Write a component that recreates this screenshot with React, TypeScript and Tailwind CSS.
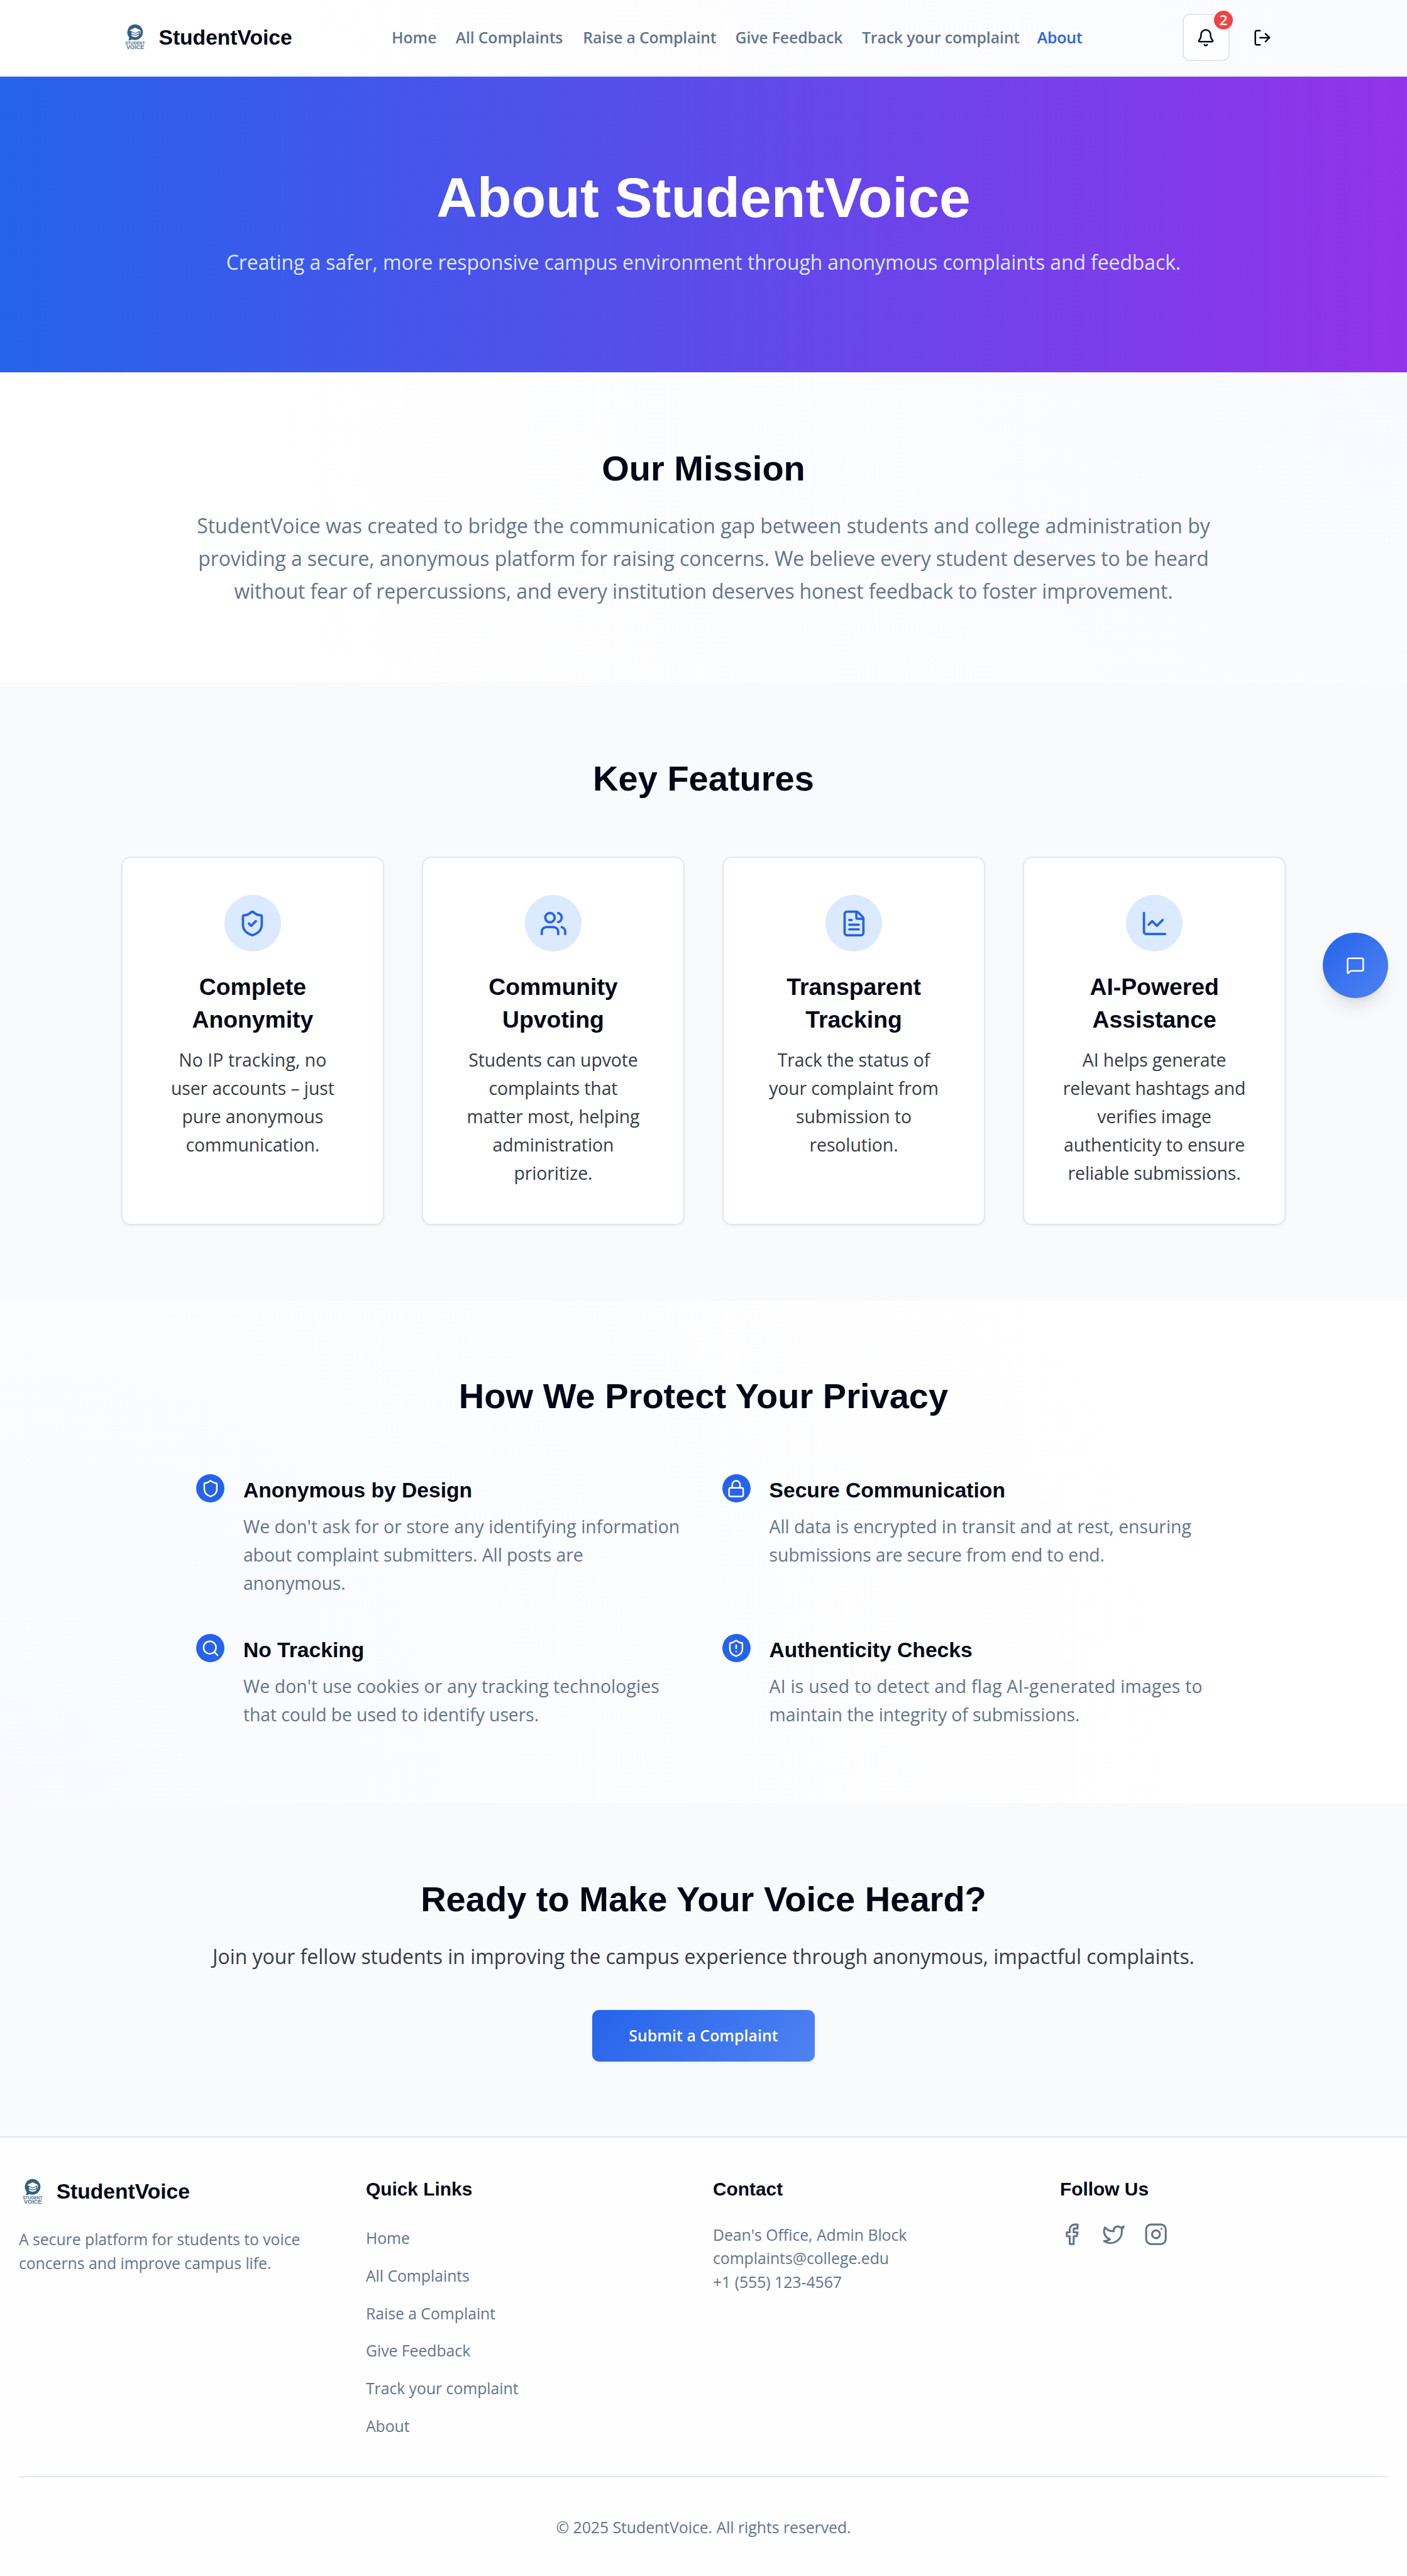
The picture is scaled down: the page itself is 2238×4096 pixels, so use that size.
import {
  Bell,
  ChartLine,
  Facebook,
  FileText,
  Instagram,
  Lock,
  LogOut,
  MessageSquare,
  Search,
  Shield,
  ShieldAlert,
  ShieldCheck,
  Twitter,
  Users,
} from "lucide-react";

type Line = string | { text: string; tracking: string };

const navItems = [
  { label: "Home", width: "w-[2.4rem]" },
  { label: "All Complaints", width: "w-[5.78rem]" },
  { label: "Raise a Complaint", width: "w-[7.11rem]" },
  { label: "Give Feedback", width: "w-[5.74rem]" },
  { label: "Track your complaint", width: "w-[8.33rem]" },
  { label: "About", width: "w-[2.46rem]", active: true },
];

const missionLines: Line[] = [
  {
    text: "StudentVoice was created to bridge the communication gap between students and college administration by",
    tracking: "tracking-[0.0005em]",
  },
  "providing a secure, anonymous platform for raising concerns. We believe every student deserves to be heard",
  {
    text: "without fear of repercussions, and every institution deserves honest feedback to foster improvement.",
    tracking: "tracking-[-0.005em]",
  },
];

const features = [
  {
    icon: ShieldCheck,
    title: ["Complete", "Anonymity"],
    lines: [
      { text: "No IP tracking, no", tracking: "tracking-[0.004em]" },
      "user accounts – just",
      "pure anonymous",
      "communication.",
    ] as Line[],
  },
  {
    icon: Users,
    title: ["Community", "Upvoting"],
    lines: ["Students can upvote", "complaints that", "matter most, helping", "administration", "prioritize."] as Line[],
  },
  {
    icon: FileText,
    title: ["Transparent", "Tracking"],
    lines: ["Track the status of", "your complaint from", "submission to", "resolution."] as Line[],
  },
  {
    icon: ChartLine,
    title: ["AI-Powered", "Assistance"],
    lines: [
      "AI helps generate",
      "relevant hashtags and",
      "verifies image",
      "authenticity to ensure",
      "reliable submissions.",
    ] as Line[],
  },
];

const privacy = [
  {
    icon: Shield,
    title: "Anonymous by Design",
    lines: [
      { text: "We don't ask for or store any identifying information", tracking: "tracking-[0.002em]" },
      "about complaint submitters. All posts are",
      "anonymous.",
    ] as Line[],
  },
  {
    icon: Lock,
    title: "Secure Communication",
    lines: [
      { text: "All data is encrypted in transit and at rest, ensuring", tracking: "tracking-[-0.001em]" },
      { text: "submissions are secure from end to end.", tracking: "tracking-[-0.006em]" },
    ] as Line[],
  },
  {
    icon: Search,
    title: "No Tracking",
    lines: [
      { text: "We don't use cookies or any tracking technologies", tracking: "tracking-[0.003em]" },
      "that could be used to identify users.",
    ] as Line[],
  },
  {
    icon: ShieldAlert,
    title: "Authenticity Checks",
    lines: [
      { text: "AI is used to detect and flag AI-generated images to", tracking: "tracking-[0.008em]" },
      "maintain the integrity of submissions.",
    ] as Line[],
  },
];

const heading = "font-['Liberation_Sans',Arial,sans-serif] font-bold text-[#020817]";
const sectionHeading = `${heading} -translate-y-px text-3xl leading-9`;
const bodyLg = "translate-y-px text-[1.069rem] leading-7 tracking-[-0.003em]";
const bodyBase = "translate-y-px text-[0.95rem] leading-6 tracking-[-0.003em]";
const bodySm = "translate-y-px text-[0.831rem] leading-5 tracking-[-0.002em]";

function Lines({ lines }: { lines: Line[] }) {
  return (
    <>
      {lines.map((line) => {
        const text = typeof line === "string" ? line : line.text;
        const tracking = typeof line === "string" ? "" : line.tracking;
        return (
          <span key={text} className={`block whitespace-nowrap ${tracking}`}>
            {text}
          </span>
        );
      })}
    </>
  );
}

function Logo() {
  return (
    <svg viewBox="0 0 48 48" className="size-6 shrink-0" aria-hidden="true">
      <path
        d="M23.600 2a13.300 13.300 0 1 1-5.400 25.500C16 28.800 13.800 29.300 11.500 29.300c1.400-1.800 1.900-3.600 1.700-5.600A13.300 13.300 0 0 1 23.600 2Z"
        fill="#35607c"
      />
      <path d="m14 12 9.500-4.500L33 12l-9.500 4.500Z" fill="#fff" />
      <path d="M17.500 15v6.500c3.500 2.800 8.500 2.800 12 0V15l-6 3Z" fill="#fff" />
      <path d="M18 18.500c3.500 2.500 7.500 2.500 11 0" stroke="#35607c" strokeWidth="1.400" fill="none" />
      <path d="M32 12.500v5.500" stroke="#fff" strokeWidth="1.200" />
      <text
        x="6.600"
        y="36"
        textLength="33.500"
        lengthAdjust="spacingAndGlyphs"
        fontSize="8"
        fontWeight="700"
        fill="#4a7089"
        fontFamily="Liberation Sans, sans-serif"
      >
        STUDENT
      </text>
      <text
        x="8.500"
        y="44.200"
        textLength="30.500"
        lengthAdjust="spacingAndGlyphs"
        fontSize="10"
        fontWeight="700"
        fill="#4a7089"
        fontFamily="Liberation Sans, sans-serif"
      >
        VOICE
      </text>
    </svg>
  );
}

function Brand() {
  return (
    <div className="flex items-center gap-2">
      <Logo />
      <span className={`text-lg ${heading}`}>StudentVoice</span>
    </div>
  );
}

export default function App() {
  return (
    <div className="relative w-full overflow-hidden bg-white font-['Open_Sans',sans-serif] text-[#020817]">
      <style>{"html{font-size:29.88px}"}</style>

      <header className="border-b-2 border-[#e2e8f0] bg-[linear-gradient(to_right,#ffffff_20%,#fafbff)]">
        <div className="mx-auto flex h-16 w-[62rem] items-center">
          <Brand />
          <nav className="ml-[5.3rem] flex gap-4 text-[0.831rem] leading-5 font-semibold tracking-[-0.006em]">
            {navItems.map((item) => (
              <a
                key={item.label}
                className={`whitespace-nowrap ${item.width} ${item.active ? "text-[#2563eb]" : "text-[#64748b]"}`}
              >
                {item.label}
              </a>
            ))}
          </nav>
          <div className="ml-auto flex gap-2">
            <button className="relative flex size-10 items-center justify-center rounded-md border-2 border-[#e2e8f0] bg-white">
              <Bell className="size-4" />
              <span className="absolute -top-1 -right-1 flex size-4 items-center justify-center rounded-full bg-[#ef4444] text-[0.75rem] leading-none font-semibold text-white">
                2
              </span>
            </button>
            <button className="flex size-10 items-center justify-center">
              <LogOut className="size-4" />
            </button>
          </div>
        </div>
      </header>

      <section className="bg-[linear-gradient(to_right,#2563eb,#9333ea)] py-20 text-center text-white">
        <h1 className="mb-4 -translate-y-px font-['Liberation_Sans',Arial,sans-serif] text-5xl leading-[3rem] font-bold">
          About StudentVoice
        </h1>
        <p className={`text-[#dbeafe] ${bodyLg}`}>
          Creating a safer, more responsive campus environment through anonymous complaints and feedback.
        </p>
      </section>

      <section className="bg-[radial-gradient(circle_at_100%_0%,#f8faff,#ffffff_80%)] py-16 text-center">
        <h2 className={`mb-4 ${sectionHeading}`}>Our Mission</h2>
        <p className={`text-[#64748b] ${bodyLg}`}>
          <Lines lines={missionLines} />
        </p>
      </section>

      <section className="bg-[#f9fafc] py-16">
        <h2 className={`mb-12 text-center ${sectionHeading}`}>Key Features</h2>
        <div className="mx-auto grid w-[62rem] grid-cols-4 gap-8">
          {features.map(({ icon: Icon, title, lines }) => (
            <article
              key={title[0]}
              className="flex h-[19.64rem] flex-col items-center rounded-lg border-2 border-[#e2e8f0] bg-white pt-8 text-center shadow-[0_2px_4px_rgba(0,0,0,0.05)]"
            >
              <div className="mb-4 flex size-12 items-center justify-center rounded-full bg-[#dbeafe]">
                <Icon className="size-6 text-[#2563eb]" />
              </div>
              <h3 className={`mb-2 text-xl leading-7 ${heading}`}>
                <Lines lines={title} />
              </h3>
              <p className={`text-[#363b44] ${bodyBase}`}>
                <Lines lines={lines} />
              </p>
            </article>
          ))}
        </div>
      </section>

      <section className="bg-[radial-gradient(circle_at_0%_100%,#f8faff,#ffffff_80%)] py-16">
        <h2 className={`mb-12 text-center ${sectionHeading}`}>How We Protect Your Privacy</h2>
        <div className="mx-auto grid w-[54rem] grid-cols-2 gap-8">
          {privacy.map(({ icon: Icon, title, lines }) => (
            <div key={title} className="flex items-start gap-4">
              <div className="flex size-6 shrink-0 items-center justify-center rounded-full bg-[#2563eb]">
                <Icon className="size-4 text-white" />
              </div>
              <div>
                <h3 className={`mb-1 text-lg leading-7 ${heading}`}>{title}</h3>
                <p className={`text-[#64748b] ${bodyBase}`}>
                  <Lines lines={lines} />
                </p>
              </div>
            </div>
          ))}
        </div>
      </section>

      <section className="bg-[#f9fafc] py-16 text-center">
        <h2 className={`mb-4 ${sectionHeading}`}>Ready to Make Your Voice Heard?</h2>
        <p className={`mb-8 text-[#363b44] ${bodyLg}`}>
          <Lines
            lines={[
              {
                text: "Join your fellow students in improving the campus experience through anonymous, impactful complaints.",
                tracking: "tracking-[-0.001em]",
              },
            ]}
          />
        </p>
        <button className="mx-auto flex h-11 w-[11.875rem] items-center justify-center rounded-md bg-[linear-gradient(135deg,#2563eb,#4f83f1)] text-[0.831rem] font-semibold tracking-[0.002em] text-white shadow-[0_2px_4px_rgba(0,0,0,0.06)]">
          Submit a Complaint
        </button>
      </section>

      <footer className="border-t-2 border-[#e2e8f0] bg-[#fefefe] px-4 py-8">
        <div className="grid grid-cols-4 gap-4">
          <div>
            <Brand />
            <p className={`mt-4 text-[#64748b] ${bodySm}`}>
              <Lines lines={["A secure platform for students to voice", "concerns and improve campus life."]} />
            </p>
          </div>
          <div>
            <h4 className={`mb-4 text-base leading-6 ${heading}`}>Quick Links</h4>
            <ul className={`flex flex-col gap-2 text-[#64748b] ${bodySm}`}>
              {navItems.map((item) => (
                <li key={item.label} className="flex h-6 items-center pt-[0.1rem]">
                  {item.label}
                </li>
              ))}
            </ul>
          </div>
          <div>
            <h4 className={`mb-4 text-base leading-6 ${heading}`}>Contact</h4>
            <p className={`text-[#64748b] ${bodySm}`}>
              <Lines lines={["Dean's Office, Admin Block", "complaints@college.edu", "+1 (555) 123-4567"]} />
            </p>
          </div>
          <div>
            <h4 className={`mb-4 text-base leading-6 ${heading}`}>Follow Us</h4>
            <div className="flex gap-4 text-[#64748b]">
              <Facebook className="size-5" />
              <Twitter className="size-5" />
              <Instagram className="size-5" />
            </div>
          </div>
        </div>
        <div className="mt-8 border-t-2 border-[#e2e8f0] pt-8 text-center">
          <p className={`text-[#64748b] ${bodySm}`}>© 2025 StudentVoice. All rights reserved.</p>
        </div>
      </footer>

      <button className="absolute top-[49.625rem] right-4 flex size-14 items-center justify-center rounded-full bg-[linear-gradient(135deg,#2563eb,#4f83f1)] text-white shadow-[0_19px_28px_-6px_rgba(0,0,0,0.1),0_7px_11px_-7px_rgba(0,0,0,0.1)]">
        <MessageSquare className="size-4" />
      </button>
    </div>
  );
}
